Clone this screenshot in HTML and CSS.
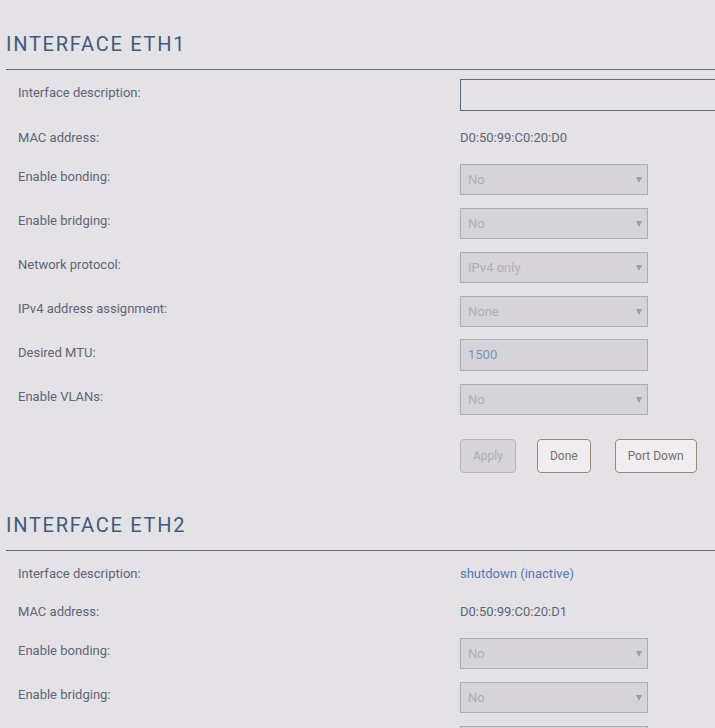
FILE: index.html
```html
<!DOCTYPE html>
<html lang="en">
<head>
  <meta charset="UTF-8">
  <meta name="viewport" content="width=device-width, initial-scale=1.0">
  <title>Interfaces</title>
  <link rel="stylesheet" href="styles.css">
</head>
<body>
  <div class="page">
    <!-- eth1 -->
    <section class="iface">
      <h2 class="iface-title">Interface eth1</h2>
      <div class="row row-first">
        <label class="label shifted">Interface description:</label>
        <input class="text-input" type="text">
      </div>
      <div class="row row-text">
        <span class="label">MAC address:</span>
        <span class="value">D0:50:99:C0:20:D0</span>
      </div>
      <div class="row">
        <label class="label shifted">Enable bonding:</label>
        <div class="select">No</div>
      </div>
      <div class="row">
        <label class="label shifted">Enable bridging:</label>
        <div class="select">No</div>
      </div>
      <div class="row">
        <label class="label shifted">Network protocol:</label>
        <div class="select">IPv4 only</div>
      </div>
      <div class="row">
        <label class="label shifted">IPv4 address assignment:</label>
        <div class="select">None</div>
      </div>
      <div class="row">
        <label class="label shifted">Desired MTU:</label>
        <div class="mtu">1500</div>
      </div>
      <div class="row">
        <label class="label shifted">Enable VLANs:</label>
        <div class="select">No</div>
      </div>
      <div class="actions">
        <button class="btn btn-disabled">Apply</button>
        <button class="btn">Done</button>
        <button class="btn">Port Down</button>
      </div>
    </section>

    <!-- eth2 -->
    <section class="iface">
      <h2 class="iface-title">Interface eth2</h2>
      <div class="row row-desc">
        <span class="label">Interface description:</span>
        <span class="value link">shutdown (inactive)</span>
      </div>
      <div class="row row-mac">
        <span class="label">MAC address:</span>
        <span class="value">D0:50:99:C0:20:D1</span>
      </div>
      <div class="row">
        <label class="label shifted">Enable bonding:</label>
        <div class="select">No</div>
      </div>
      <div class="row">
        <label class="label shifted">Enable bridging:</label>
        <div class="select">No</div>
      </div>
      <div class="row">
        <label class="label shifted"></label>
        <div class="select"></div>
      </div>
    </section>
  </div>
</body>
</html>
```

FILE: styles.css
```css
html, body {
  margin: 0;
  background: #e4e2e5;
  overflow: hidden;
}

body {
  font-family: Roboto, "Liberation Sans", sans-serif;
  font-size: 13px;
  color: #5d6679;
}

.page {
  padding: 32px 0 0 6px;
}

.iface {
  margin-bottom: 40px;
}

.iface-title {
  margin: 0;
  font-size: 20px;
  font-weight: 400;
  line-height: 24px;
  letter-spacing: 1.75px;
  text-transform: uppercase;
  color: #3e5a82;
  padding-bottom: 13px;
  border-bottom: 1px solid #5b6a80;
  white-space: nowrap;
}

.row {
  display: flex;
  align-items: center;
  height: 44px;
  padding-left: 12px;
  white-space: nowrap;
}

.row-first {
  margin-top: 3px;
}

.row-text {
  height: 40px;
}

.row-desc {
  height: 37px;
  margin-top: 4px;
}

.row-mac {
  height: 39px;
}

.label {
  width: 442px;
  flex: none;
}

.shifted {
  padding-bottom: 5px;
}

.value {
  color: #5d6679;
}

.link {
  color: #5577bb;
}

.text-input {
  width: 300px;
  height: 32px;
  box-sizing: border-box;
  margin: 0;
  border: 1px solid #5b6880;
  background: transparent;
  flex: none;
}

.select,
.mtu {
  position: relative;
  width: 188px;
  height: 31px;
  box-sizing: border-box;
  border: 1px solid #aeadb0;
  background: #d6d4d8;
  color: #b0afb3;
  line-height: 29px;
  padding-left: 7px;
  flex: none;
}

.mtu {
  height: 32px;
  color: #7a94b8;
  line-height: 30px;
}

.select::after {
  content: "";
  position: absolute;
  right: 5px;
  top: 12px;
  border-left: 3px solid transparent;
  border-right: 3px solid transparent;
  border-top: 6px solid #9b9ca3;
}

.actions {
  display: flex;
  padding: 18px 0 0 454px;
}

.btn {
  font-family: Roboto, "Liberation Sans", sans-serif;
  font-size: 12px;
  height: 34px;
  padding: 0 12px;
  margin-right: 21px;
  border: 1px solid #9a8a78;
  border-radius: 4px;
  background: #efedf0;
  color: #7c7066;
  white-space: nowrap;
}

.btn + .btn {
  margin-right: 24px;
}

.btn-disabled {
  background: #d6d4d8;
  border-color: #b5b3b8;
  color: #aeacb0;
}
```
